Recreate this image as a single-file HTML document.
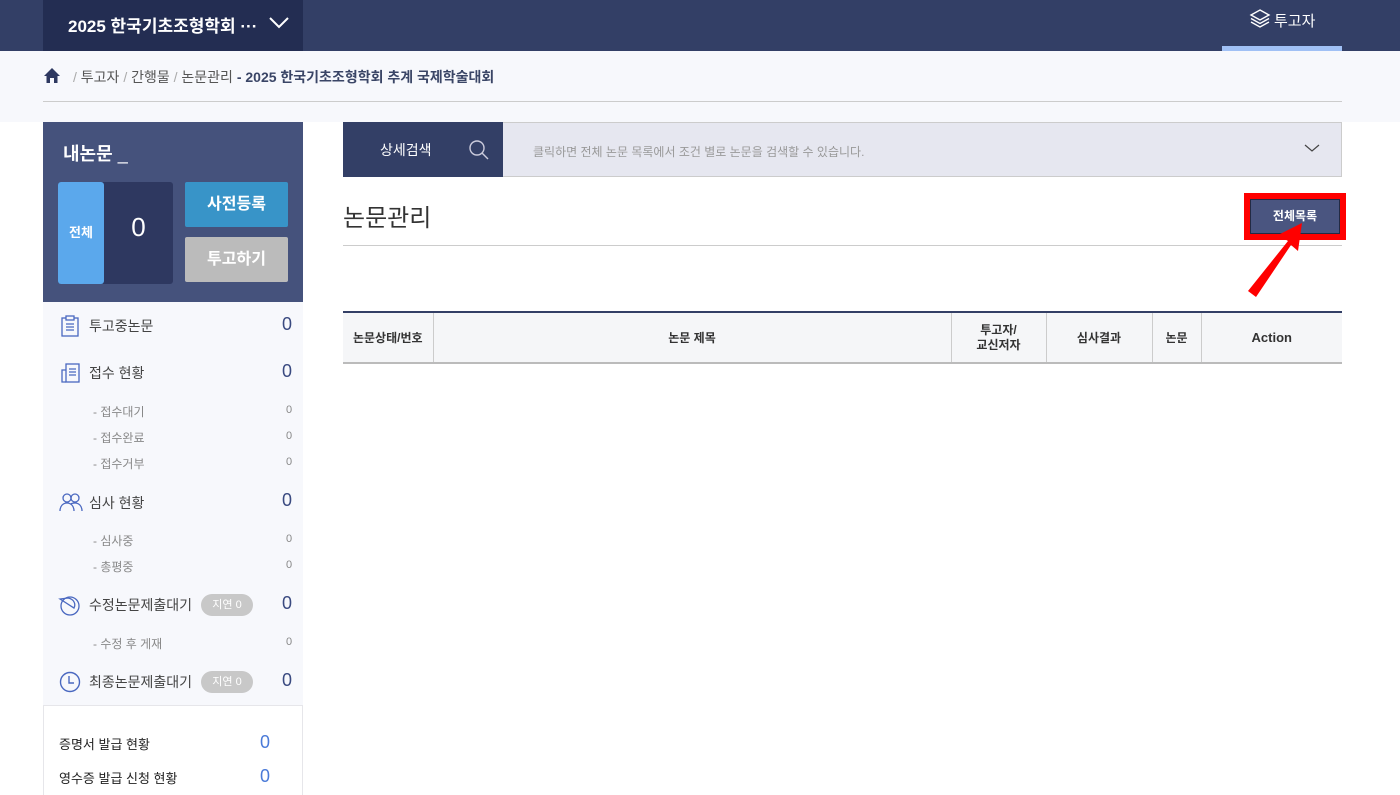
<!DOCTYPE html>
<html><head><meta charset="utf-8"><style>
*{margin:0;padding:0;box-sizing:border-box}
body{width:1400px;height:788px;overflow:hidden;background:#fff;font-family:"Liberation Sans","Noto Sans CJK KR",sans-serif;position:relative;color:#333}
.a{position:absolute;white-space:nowrap}
.top{left:0;top:0;width:1400px;height:51px;background:#333f66}
.menu{width:1400px;height:788px}
.menu div{position:absolute;font-size:14px;color:#444;white-space:nowrap}
.menu .cnt{position:absolute;left:282px;font-size:18px;color:#3a4a80}
.menu .sub{position:absolute;left:93px;font-size:12px;color:#888}
.menu .subc{position:absolute;left:286px;font-size:11px;color:#888}
.menu .badge{position:absolute;left:201px;width:52px;height:22px;border-radius:11px;background:#c8c8c8;color:#fff;font-size:11px;text-align:center;line-height:22px}
th{font-size:12px;font-weight:bold;color:#333;border-right:1px solid #ccc;background:#f5f6f8}
</style></head><body>
<div class="a top"></div>
<div class="a" style="left:43px;top:0;width:260px;height:51px;background:#232d52"></div>
<div class="a" style="left:68px;top:12px;color:#fff;font-size:17px;font-weight:bold">2025 한국기초조형학회 ···</div>
<svg class="a" style="left:268px;top:14px" width="22" height="16"><path d="M2 4 L11 13 L20 4" stroke="#fff" stroke-width="2" fill="none"/></svg>
<div class="a" style="left:1222px;top:46px;width:120px;height:5px;background:#a0c0f5"></div>
<svg class="a" style="left:1249px;top:8px" width="22" height="22" viewBox="0 0 22 22" fill="none" stroke="#fff" stroke-width="1.4"><path d="M11 2 L20 7 L11 12 L2 7Z"/><path d="M2 10.5 L11 15.5 L20 10.5"/><path d="M2 14 L11 19 L20 14"/></svg>
<div class="a" style="left:1274px;top:10px;color:#fff;font-size:15px">투고자</div>
<div class="a" style="left:0;top:51px;width:1400px;height:71px;background:#f7f8fc"></div>
<svg class="a" style="left:43px;top:67px" width="18" height="17" viewBox="0 0 18 17"><path d="M9 1 L17 9 H14.5 V16 H11 V11 H7 V16 H3.5 V9 H1Z" fill="#2e3860"/></svg>
<div class="a" style="left:73px;top:67px;font-size:14px;color:#555"><span style="color:#aaa">/</span> 투고자 <span style="color:#aaa">/</span> 간행물 <span style="color:#aaa">/</span> 논문관리 <b style="color:#3a4566">- 2025 한국기초조형학회 추계 국제학술대회</b></div>
<div class="a" style="left:43px;top:101px;width:1299px;height:1px;background:#ccc"></div>
<div class="a" style="left:43px;top:122px;width:260px;height:180px;background:#45527c"></div>
<div class="a" style="left:63px;top:140px;color:#fff;font-size:18px;font-weight:bold">내논문 <span style="font-weight:normal">_</span></div>
<div class="a" style="left:58px;top:182px;width:115px;height:102px;background:#2e3860;border-radius:3px"></div>
<div class="a" style="left:58px;top:182px;width:46px;height:102px;background:#5ba8ec;border-radius:3px;color:#fff;font-size:13px;font-weight:bold;text-align:center;line-height:102px">전체</div>
<div class="a" style="left:104px;top:212px;width:69px;text-align:center;color:#fff;font-size:26px">0</div>
<div class="a" style="left:185px;top:182px;width:103px;height:45px;background:#3894c8;border-radius:2px;color:#fff;font-size:16px;font-weight:bold;text-align:center;line-height:45px">사전등록</div>
<div class="a" style="left:185px;top:237px;width:103px;height:45px;background:#bbb;border-radius:2px;color:#fff;font-size:16px;font-weight:bold;text-align:center;line-height:45px">투고하기</div>
<div class="a" style="left:43px;top:302px;width:260px;height:403px;background:#f7f8fc"></div>
<div class="a menu" style="left:0;top:0">
<svg class="a" style="left:60px;top:315px" width="20" height="22" viewBox="0 0 20 22" fill="none" stroke="#4a68c0" stroke-width="1.3"><rect x="2" y="3" width="16" height="18"/><rect x="6" y="1" width="8" height="4" fill="#f7f8fc"/><path d="M6 9h8M6 12h8M6 15h8"/></svg>
<div style="left:89px;top:316px">투고중논문</div><div class="cnt" style="top:314px">0</div>
<svg class="a" style="left:60px;top:362px" width="20" height="22" viewBox="0 0 20 22" fill="none" stroke="#4a68c0" stroke-width="1.3"><rect x="6" y="2" width="13" height="18"/><path d="M6 8H2V20H6M9 7h7M9 10h7M9 13h7"/></svg>
<div style="left:89px;top:363px">접수 현황</div><div class="cnt" style="top:361px">0</div>
<div class="sub" style="top:403px">- 접수대기</div><div class="subc" style="top:404px">0</div>
<div class="sub" style="top:429px">- 접수완료</div><div class="subc" style="top:430px">0</div>
<div class="sub" style="top:455px">- 접수거부</div><div class="subc" style="top:456px">0</div>
<svg class="a" style="left:59px;top:492px" width="24" height="20" viewBox="0 0 24 20" fill="none" stroke="#4a68c0" stroke-width="1.3"><circle cx="8" cy="6" r="4"/><circle cx="16" cy="6" r="4"/><path d="M1 19c0-5 3-8 7-8s7 3 7 8M12 12c1-1 2-1 4-1 4 0 7 3 7 8"/></svg>
<div style="left:89px;top:493px">심사 현황</div><div class="cnt" style="top:490px">0</div>
<div class="sub" style="top:532px">- 심사중</div><div class="subc" style="top:533px">0</div>
<div class="sub" style="top:558px">- 총평중</div><div class="subc" style="top:559px">0</div>
<svg class="a" style="left:58px;top:594px" width="24" height="22" viewBox="0 0 24 22" fill="none" stroke="#4a68c0" stroke-width="1.3"><circle cx="12" cy="12" r="9"/><path d="M2 5l14 9c2-4 0-9-6-10z"/></svg>
<div style="left:89px;top:595px">수정논문제출대기</div><div class="badge" style="top:594px">지연 0</div><div class="cnt" style="top:593px">0</div>
<div class="sub" style="top:635px">- 수정 후 게재</div><div class="subc" style="top:636px">0</div>
<svg class="a" style="left:59px;top:671px" width="22" height="22" viewBox="0 0 22 22" fill="none" stroke="#4a68c0" stroke-width="1.4"><circle cx="11" cy="11" r="9.5"/><path d="M10 5v7h5"/></svg>
<div style="left:89px;top:672px">최종논문제출대기</div><div class="badge" style="top:671px">지연 0</div><div class="cnt" style="top:670px">0</div>
</div>
<div class="a" style="left:43px;top:705px;width:260px;height:90px;border:1px solid #e6e6ea;border-bottom:none"></div>
<div class="a" style="left:59px;top:734px;font-size:13px;color:#222">증명서 발급 현황</div><div class="a" style="left:260px;top:732px;font-size:18px;color:#4a7ad8">0</div>
<div class="a" style="left:59px;top:768px;font-size:13px;color:#222">영수증 발급 신청 현황</div><div class="a" style="left:260px;top:766px;font-size:18px;color:#4a7ad8">0</div>
<div class="a" style="left:343px;top:122px;width:999px;height:55px;background:#e6e7f0;border:1px solid #ccc"></div>
<div class="a" style="left:343px;top:122px;width:160px;height:55px;background:#333f66"></div>
<div class="a" style="left:380px;top:140px;color:#fff;font-size:14px">상세검색</div>
<svg class="a" style="left:468px;top:139px" width="22" height="22" viewBox="0 0 22 22" fill="none" stroke="#ccd" stroke-width="1.4"><circle cx="9" cy="9" r="7"/><path d="M14 14l6 6"/></svg>
<div class="a" style="left:533px;top:143px;color:#999;font-size:12px">클릭하면 전체 논문 목록에서 조건 별로 논문을 검색할 수 있습니다.</div>
<svg class="a" style="left:1304px;top:142px" width="16" height="12"><path d="M1 3l7 6 7-6" stroke="#444" stroke-width="1.2" fill="none"/></svg>
<div class="a" style="left:343px;top:198px;font-size:24px;color:#333">논문관리</div>
<div class="a" style="left:343px;top:245px;width:999px;height:1px;background:#ccc"></div>
<div class="a" style="left:1244px;top:193px;width:102px;height:47px;border:6px solid #f00"></div>
<div class="a" style="left:1250px;top:199px;width:90px;height:35px;background:#4a5580;border:1px solid #222a44;color:#fff;font-size:12px;font-weight:bold;text-align:center;line-height:33px">전체목록</div>
<svg class="a" style="left:1240px;top:215px" width="80" height="90"><path d="M8 76 L48 26 L38 20 L62 8 L58 36 L51 30 L16 82Z" fill="#f00"/></svg>
<table class="a" style="left:343px;top:311px;width:999px;height:53px;border-collapse:collapse;border-top:2px solid #333f66;border-bottom:2px solid #bbb">
<tr><th style="width:90px">논문상태/번호</th><th style="width:518px">논문 제목</th><th style="width:95px;line-height:15px">투고자/<br>교신저자</th><th style="width:106px">심사결과</th><th style="width:49px">논문</th><th style="border-right:none;font-size:13px">Action</th></tr></table>
</body></html>
